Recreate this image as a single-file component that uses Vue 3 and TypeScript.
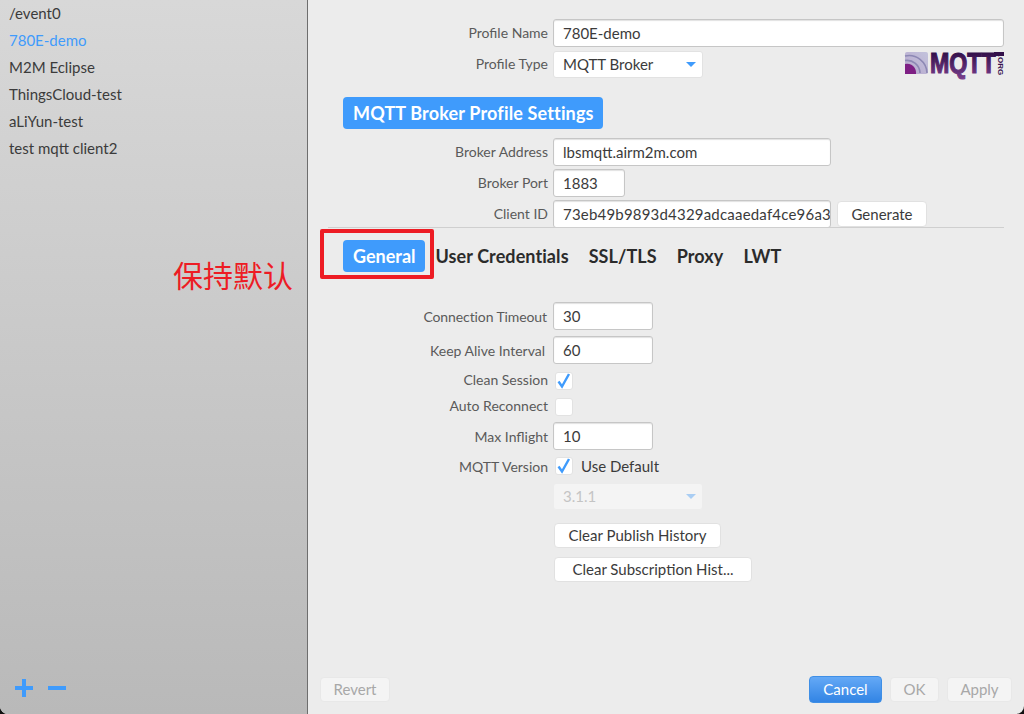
<script setup lang="ts">
const profiles = ['/event0', '780E-demo', 'M2M Eclipse', 'ThingsCloud-test', 'aLiYun-test', 'test mqtt client2'];
const activeProfile = '780E-demo';
const tabs = ['User Credentials', 'SSL/TLS', 'Proxy', 'LWT'];
</script>

<template>
  <div class="window">
    <aside class="sidebar">
      <ul class="profile-list">
        <li v-for="p in profiles" :key="p" :class="{ active: p === activeProfile }">{{ p }}</li>
      </ul>
      <div class="list-actions">
        <svg width="18" height="18" viewBox="0 0 18 18"><path d="M0 7h7V0h4v7h7v4h-7v7H7v-7H0z" fill="#3f9bfc" /></svg>
        <svg width="18" height="18" viewBox="0 0 18 18"><rect x="0" y="7" width="18" height="4" fill="#3f9bfc" /></svg>
      </div>
    </aside>

    <main class="panel">
      <section class="head">
        <div class="row">
          <label>Profile Name</label>
          <div class="input wide">780E-demo</div>
        </div>
        <div class="row row-type">
          <label>Profile Type</label>
          <div class="select">MQTT Broker<i class="caret" /></div>
          <svg class="logo" width="100" height="42" viewBox="0 -9 100 42">
            <defs>
              <linearGradient id="mq" x1="0" y1="0" x2="0" y2="1">
                <stop offset="0.2" stop-color="#33104a" />
                <stop offset="1" stop-color="#7a3f8e" />
              </linearGradient>
              <linearGradient id="sq" x1="1" y1="0" x2="0" y2="1">
                <stop offset="0" stop-color="#c3c3dc" />
                <stop offset="1" stop-color="#b7a7cd" />
              </linearGradient>
            </defs>
            <rect x="1" y="1" width="23" height="22" rx="2" fill="url(#sq)" />
            <path d="M1 5A18 18 0 0 1 23 22" fill="none" stroke="#8d88b4" stroke-width="1.600" />
            <path d="M1 9.500A13 13 0 0 1 16 22" fill="none" stroke="#8d88b4" stroke-width="1.600" />
            <path d="M1 13a9 9 0 0 1 11 10H1z" fill="#7e1f84" />
            <text transform="translate(26 22) scale(0.8 1)" class="logo-text" fill="url(#mq)" stroke="url(#mq)" stroke-width="1.200">MQTT</text>
            <rect x="90" y="1" width="10" height="4" fill="#33104a" />
            <text transform="translate(94 14) rotate(90)" class="logo-org" text-anchor="middle" fill="#3a1450">.ORG</text>
          </svg>
        </div>

        <h2 class="section-pill">MQTT Broker Profile Settings</h2>

        <div class="row">
          <label>Broker Address</label>
          <div class="input addr">lbsmqtt.airm2m.com</div>
        </div>
        <div class="row row-port">
          <label>Broker Port</label>
          <div class="input port">1883</div>
        </div>
        <div class="row row-client">
          <label>Client ID</label>
          <div class="input addr clip">73eb49b9893d4329adcaaedaf4ce96a3</div>
          <button class="btn generate">Generate</button>
        </div>
      </section>

      <nav class="tabs">
        <span class="tab selected">General</span>
        <span v-for="t in tabs" :key="t" class="tab">{{ t }}</span>
      </nav>

      <section class="general">
        <div class="row">
          <label class="tight">Connection Timeout</label>
          <div class="input num">30</div>
        </div>
        <div class="row keep">
          <label class="nudge">Keep Alive Interval</label>
          <div class="input num">60</div>
        </div>
        <div class="row row-check clean">
          <label class="raised">Clean Session</label>
          <div class="check">
            <svg width="18" height="18" viewBox="0 0 18 18"><path d="M3.500 9.500l3.500 5 7-12.500" fill="none" stroke="#3f9bfc" stroke-width="2.400" /></svg>
          </div>
        </div>
        <div class="row row-check reconnect">
          <label class="raised">Auto Reconnect</label>
          <div class="check" />
        </div>
        <div class="row inflight">
          <label>Max Inflight</label>
          <div class="input num">10</div>
        </div>
        <div class="row row-check version">
          <label>MQTT Version</label>
          <div class="check">
            <svg width="18" height="18" viewBox="0 0 18 18"><path d="M3.500 9.500l3.500 5 7-12.500" fill="none" stroke="#3f9bfc" stroke-width="2.400" /></svg>
          </div>
          <span class="check-text">Use Default</span>
        </div>
        <div class="row row-disabled">
          <label />
          <div class="select disabled">3.1.1<i class="caret" /></div>
        </div>
        <div class="row row-clear first">
          <label />
          <button class="btn clear-publish">Clear Publish History</button>
        </div>
        <div class="row row-clear">
          <label />
          <button class="btn clear-sub">Clear Subscription Hist...</button>
        </div>
      </section>

      <footer class="footer">
        <button class="btn off revert">Revert</button>
        <button class="btn primary">Cancel</button>
        <button class="btn off ok">OK</button>
        <button class="btn off apply">Apply</button>
      </footer>

      <div class="callout-box" />
    </main>

    <span class="callout-text">保持默认</span>
  </div>
</template>

<style>
html,
body {
  margin: 0;
  background: #111;
}
</style>

<style scoped>
.window {
  position: relative;
  display: flex;
  width: 1024px;
  height: 714px;
  overflow: hidden;
  border-radius: 0 0 8px 8px;
  background: #ececec;
  font-family: Lato, "Liberation Sans", sans-serif;
  font-size: 14px;
  color: #3b3b3b;
}

/* sidebar */
.sidebar {
  display: flex;
  flex-direction: column;
  justify-content: space-between;
  box-sizing: border-box;
  width: 308px;
  height: 100%;
  border-right: 1px solid #6e6e6e;
  background: linear-gradient(#d8d8d8, #b9b9b9);
}

.profile-list {
  margin: 0;
  padding: 0 0 0 9px;
  list-style: none;
  font-size: 15px;
}

.profile-list li {
  height: 27px;
  line-height: 26px;
}

.profile-list .active {
  color: #3f9bfc;
}

.list-actions {
  display: flex;
  gap: 15px;
  padding: 0 0 17px 15px;
}

/* right panel */
.panel {
  position: relative;
  flex: 1;
  display: flex;
  flex-direction: column;
  min-width: 0;
}

.head {
  padding: 19px 20px 0 0;
}

.row {
  display: flex;
  align-items: center;
}

.row > label {
  flex: none;
  box-sizing: border-box;
  width: 240px;
  margin-right: 5px;
  text-align: right;
  color: #5a5a5a;
}

.head .row > label {
  padding-bottom: 2px;
}

.row > label.raised {
  padding-bottom: 4px;
}

.row > label.nudge {
  padding-right: 3px;
}

.row > label.tight {
  padding-right: 1px;
  letter-spacing: -0.1px;
}

.input,
.select {
  box-sizing: border-box;
  background: #fff;
  border-radius: 3px;
  padding-left: 9px;
  font-size: 15px;
  color: #3b3b3b;
  white-space: nowrap;
}

.input {
  height: 28px;
  line-height: 26px;
  border: 1px solid #c6c6c6;
  box-shadow: inset 0 1px 1px #e2e2e2;
}

.wide {
  flex: 1;
}

.addr {
  width: 278px;
}

.port {
  width: 72px;
}

.num {
  width: 100px;
}

.clip {
  overflow: hidden;
  letter-spacing: 0.2px;
}

.row-type {
  height: 27px;
  margin-top: 4px;
}

.select {
  position: relative;
  width: 150px;
  height: 27px;
  line-height: 25px;
  border: 1px solid #e2e2e2;
}

.caret {
  position: absolute;
  right: 6px;
  top: 10px;
  border-left: 5px solid transparent;
  border-right: 5px solid transparent;
  border-top: 5px solid #3f9bfc;
}

.logo {
  align-self: flex-start;
  margin: -9px 0 -6px auto;
}

.logo-text {
  font-family: "Liberation Sans", sans-serif;
  font-size: 29px;
  font-weight: 700;
}

.logo-org {
  font-family: "Liberation Sans", sans-serif;
  font-size: 8px;
  font-weight: 700;
}

.section-pill {
  width: fit-content;
  margin: 19px 0 9px 35px;
  padding: 0 9px 0 10px;
  height: 32px;
  line-height: 32px;
  border-radius: 4px;
  background: #3f9bfc;
  color: #fff;
  font-size: 18px;
  font-weight: 700;
  letter-spacing: 0.15px;
}

.row-port {
  margin-top: 3px;
}

.row-client {
  margin-top: 3px;
}

.btn {
  box-sizing: border-box;
  padding: 0 0 2px;
  border: 1px solid #e1e1e1;
  border-radius: 4px;
  background: #fff;
  font-family: inherit;
  font-size: 15px;
  color: #3b3b3b;
}

.generate {
  width: 90px;
  height: 26px;
  margin-left: 6px;
  padding-bottom: 0;
}

/* tabs */
.tabs {
  display: flex;
  align-items: center;
  margin: -1px 20px 0;
  padding: 12px 0 0 15px;
  height: 32px;
  border-top: 1px solid #cfcfcf;
  font-size: 18px;
  font-weight: 700;
  color: #2b2b2b;
  letter-spacing: 0.08px;
}

.tab {
  margin-right: 20px;
}

.tab.selected {
  margin-right: 11px;
  padding: 0 9px 0 10px;
  height: 32px;
  line-height: 32px;
  border-radius: 4px;
  background: #3f9bfc;
  color: #fff;
  letter-spacing: 0;
}

/* general tab */
.general {
  padding-top: 30px;
}

.keep {
  margin-top: 6px;
}

.row-check {
  height: 18px;
}

.clean,
.reconnect {
  margin-top: 8px;
}

.inflight {
  margin-top: 6px;
}

.version {
  margin-top: 7px;
}

.check {
  box-sizing: border-box;
  flex: none;
  width: 18px;
  height: 18px;
  margin-left: 2px;
  background: #fff;
  border: 1px solid #e2e2e2;
  border-radius: 3px;
}

.check svg {
  display: block;
  margin: -1px;
}

.check-text {
  margin-left: 8px;
  font-size: 15px;
  color: #3b3b3b;
}

.row-disabled {
  margin-top: 8px;
}

.select.disabled {
  background: #f4f4f4;
  border-color: #ececec;
  color: #c4c4c4;
}

.select.disabled .caret {
  border-top-color: #a9cdf3;
}

.row-clear {
  margin-top: 9px;
}

.row-clear.first {
  margin-top: 13px;
}

.row-clear .btn {
  height: 25px;
  margin-left: 1px;
}

.clear-publish {
  width: 167px;
}

.clear-sub {
  width: 198px;
}

/* bottom buttons */
.footer {
  display: flex;
  align-items: center;
  margin-top: auto;
  padding: 0 12px 11px 12px;
}

.footer .btn {
  height: 25px;
}

.off {
  background: #f4f4f4;
  border-color: #e8e8e8;
  color: #a8a8a8;
}

.revert {
  width: 70px;
  margin-right: auto;
}

.footer .primary {
  width: 73px;
  height: 27px;
  border: 1px solid #3f8fe6;
  background: linear-gradient(#64a9f6, #3284e4);
  color: #fff;
}

.ok {
  width: 49px;
  margin-left: 8px;
}

.apply {
  width: 65px;
  margin-left: 8px;
}

/* annotation drawn over the screenshot */
.callout-box {
  position: absolute;
  left: 12px;
  top: 229px;
  box-sizing: border-box;
  width: 114px;
  height: 50px;
  border: 4px solid #ed1c24;
  border-radius: 2px;
}

.callout-text {
  position: absolute;
  left: 173px;
  top: 256px;
  font-family: "Noto Sans CJK SC", sans-serif;
  font-size: 30px;
  line-height: 36px;
  color: #ed1c24;
}
</style>
